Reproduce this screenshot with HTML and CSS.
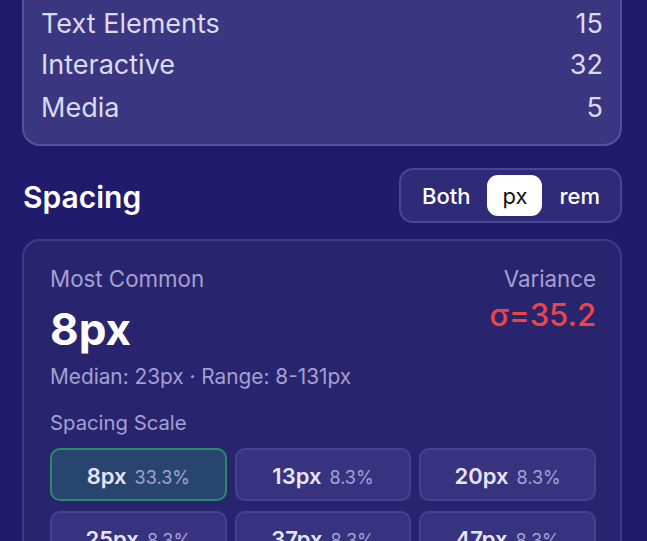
FILE: index.html
```html
<!DOCTYPE html>
<html lang="en">
<head>
<meta charset="utf-8">
<title>Spacing</title>
<link rel="stylesheet" href="styles.css">
</head>
<body>
<main class="panel">
  <section class="card counts">
    <div class="count-row"><span>Text Elements</span><span>15</span></div>
    <div class="count-row"><span>Interactive</span><span>32</span></div>
    <div class="count-row"><span>Media</span><span>5</span></div>
  </section>

  <header class="section-head">
    <h2>Spacing</h2>
    <div class="toggle">
      <button class="opt">Both</button>
      <button class="opt active">px</button>
      <button class="opt">rem</button>
    </div>
  </header>

  <section class="card spacing">
    <div class="stats">
      <div class="stat-main">
        <div class="label">Most Common</div>
        <div class="big">8px</div>
      </div>
      <div class="stat-side">
        <div class="label">Variance</div>
        <div class="sigma">σ=35.2</div>
      </div>
    </div>
    <div class="meta">Median: 23px · Range: 8-131px</div>
    <div class="scale-title">Spacing Scale</div>
    <div class="scale">
      <div class="chip selected"><b>8px</b><span>33.3%</span></div>
      <div class="chip"><b>13px</b><span>8.3%</span></div>
      <div class="chip"><b>20px</b><span>8.3%</span></div>
      <div class="chip"><b>25px</b><span>8.3%</span></div>
      <div class="chip"><b>37px</b><span>8.3%</span></div>
      <div class="chip"><b>47px</b><span>8.3%</span></div>
    </div>
  </section>
</main>
</body>
</html>
```

FILE: styles.css
```css
* { box-sizing: border-box; }
html, body { margin: 0; padding: 0; }
body {
  background: #201b6c;
  font-family: Inter, "Noto Sans", sans-serif;
  color: #dedcf3;
  overflow: hidden;
  height: 541px;
}
.panel {
  padding: 0 25px 0 22px;
  width: 647px;
}
.card {
  border: 2px solid #504c98;
  border-radius: 18px;
}
.counts {
  margin-top: -24px;
  padding: 0 17px 15px 17px;
  background: #3a3680;
  border-color: #56529c;
  border-top: none;
  border-top-left-radius: 0;
  border-top-right-radius: 0;
}
.count-row {
  display: flex;
  justify-content: space-between;
  height: 43px;
  align-items: center;
  font-size: 27px;
  color: #dcdaf1;
}
.count-row:first-child { height: 67px; align-items: flex-end; padding-bottom: 3px; }

.section-head {
  display: flex;
  justify-content: space-between;
  align-items: center;
  margin-top: 22px;
  margin-bottom: 16px;
}
.section-head h2 {
  margin: 3px 0 0 1px;
  font-size: 30px;
  font-weight: 600;
  color: #ffffff;
}
.toggle {
  display: flex;
  align-items: center;
  gap: 2px;
  height: 55px;
  padding: 0 5px 0 6px;
  background: #2f2b78;
  border: 2px solid #4a4692;
  border-radius: 14px;
}
.opt {
  font-family: inherit;
  font-size: 22px;
  font-weight: 500;
  color: #ffffff;
  background: none;
  border: none;
  height: 41px;
  padding: 0 15px;
  border-radius: 11px;
}
.opt.active {
  background: #ffffff;
  color: #111111;
  font-weight: 400;
}

.spacing {
  background: #29246e;
  border-color: #3f3b88;
  padding: 23px 24px 0 26px;
  height: 320px;
}
.stats {
  display: flex;
  justify-content: space-between;
}
.label {
  font-size: 22.3px;
  color: #a4a0d2;
  line-height: 30px;
}
.stat-side { text-align: right; }
.big {
  font-size: 44px;
  font-weight: 700;
  color: #ffffff;
  line-height: 52px;
  margin-top: 9px;
}
.sigma {
  font-size: 31px;
  font-weight: 500;
  color: #ef4444;
  line-height: 36px;
  margin-top: 3px;
}
.meta {
  font-size: 20.8px;
  color: #a4a0d2;
  margin-top: 9px;
}
.scale-title {
  font-size: 20.3px;
  color: #a4a0d2;
  margin-top: 21px;
}
.scale {
  display: grid;
  grid-template-columns: repeat(3, 1fr);
  gap: 10px 8px;
  margin-top: 13px;
}
.chip {
  display: flex;
  justify-content: center;
  align-items: baseline;
  gap: 8px;
  height: 53px;
  padding-top: 13px;
  background: #38337e;
  border: 2px solid #46428e;
  border-radius: 10px;
}
.chip b {
  font-size: 22px;
  font-weight: 600;
  color: #e6e4f6;
}
.chip span {
  font-size: 18px;
  color: #a6a2d6;
}
.chip.selected {
  background: #28456f;
  border: 2px solid #2b8a68;
}
```
